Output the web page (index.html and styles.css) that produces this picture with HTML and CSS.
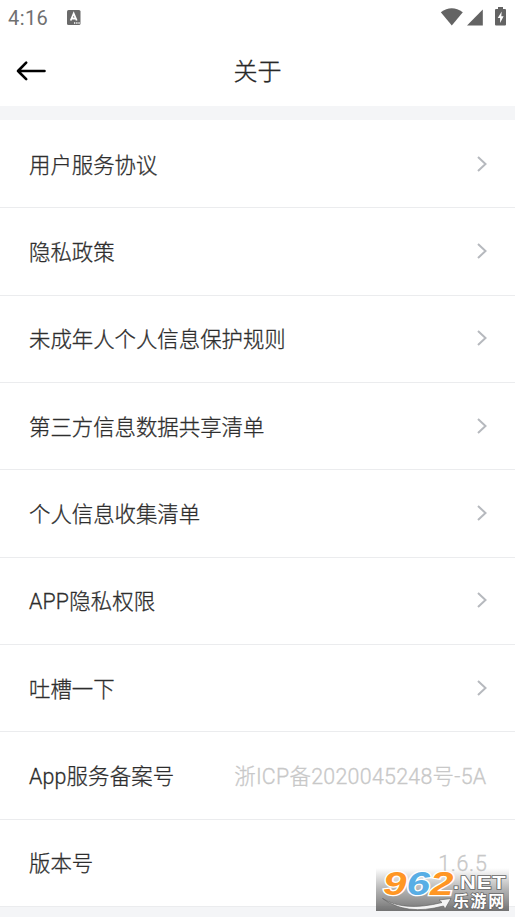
FILE: index.html
```html
<!DOCTYPE html>
<html lang="zh-CN">
<head>
<meta charset="utf-8">
<title>关于</title>
<link rel="stylesheet" href="styles.css">
</head>
<body>
<div class="screen">
  <div class="status">
    <span class="time">4:16</span>
    <svg class="badge" width="14" height="16" viewBox="0 0 14 16"><rect width="13.5" height="15" rx="1.5" fill="#6a6a6a"/><path d="M3.7 10.5 6.7 3.5 9.7 10.5M4.8 8.5H8.6" fill="none" stroke="#fff" stroke-width="1.8"/><path d="M7 13h1.3M9.2 13h1.3M11.4 13h1.3" stroke="#fff" stroke-width="1.3"/></svg>
    <svg class="signals" width="68" height="22" viewBox="0 0 68 22"><path d="M.8 5.3Q11.7-2.6 22.8 5.3L11.8 18.5Z" fill="#636363"/><path d="M42.8 2.5V18.5H27Z" fill="#636363"/><path d="M56 2h2V0h5v2h2q1 0 1 1v14.5q0 1-1 1h-9q-1 0-1-1V3q0-1 1-1Z" fill="#636363"/><path d="M61.7 4.5 57.7 11h2.4v5l3.5-6.8h-2.3Z" fill="#fff"/></svg>
  </div>
  <header class="bar">
    <svg class="back" width="30" height="22" viewBox="0 0 30 22"><path d="M10.2 2.6 2 11 10.2 19.2M2 11H28.5" fill="none" stroke="#000" stroke-width="2.6" stroke-linecap="round" stroke-linejoin="round"/></svg>
    <h1>关于</h1>
  </header>
  <main class="list">
    <div class="row"><span>用户服务协议</span><svg class="chev" viewBox="0 0 12 18"><path d="M2 2 9.5 9 2 16"/></svg></div>
    <div class="row"><span>隐私政策</span><svg class="chev" viewBox="0 0 12 18"><path d="M2 2 9.5 9 2 16"/></svg></div>
    <div class="row"><span>未成年人个人信息保护规则</span><svg class="chev" viewBox="0 0 12 18"><path d="M2 2 9.5 9 2 16"/></svg></div>
    <div class="row"><span>第三方信息数据共享清单</span><svg class="chev" viewBox="0 0 12 18"><path d="M2 2 9.5 9 2 16"/></svg></div>
    <div class="row"><span>个人信息收集清单</span><svg class="chev" viewBox="0 0 12 18"><path d="M2 2 9.5 9 2 16"/></svg></div>
    <div class="row"><span class="mixed">APP隐私权限</span><svg class="chev" viewBox="0 0 12 18"><path d="M2 2 9.5 9 2 16"/></svg></div>
    <div class="row"><span>吐槽一下</span><svg class="chev" viewBox="0 0 12 18"><path d="M2 2 9.5 9 2 16"/></svg></div>
    <div class="row"><span class="mixed">App服务备案号</span><span class="value">浙ICP备2020045248号-5A</span></div>
    <div class="row"><span>版本号</span><span class="value version">1.6.5</span></div>
  </main>
  <svg class="mark" width="133" height="43" viewBox="0 0 133 43">
    <defs><linearGradient id="shade" x1="0" y1="0" x2="0" y2="1"><stop offset="0" stop-color="#777" stop-opacity="0"/><stop offset=".5" stop-color="#777" stop-opacity=".55"/><stop offset="1" stop-color="#6c6c6c" stop-opacity=".95"/></linearGradient></defs>
    <rect width="133" height="43" fill="url(#shade)"/>
    <path d="M6.5 30.5Q28 44 66 34.5L63 32 75 30.5 69 41 67.5 38Q30 48 6.5 30.5Z" fill="#f4f4f4" stroke="#666" stroke-width=".7"/>
    <text class="digits" transform="translate(7 27) scale(1.28 1)"><tspan fill="#ff9624">9</tspan><tspan fill="#58aee5">6</tspan><tspan fill="#ff9624">2</tspan></text>
    <text class="net" transform="translate(77 21.3) scale(1.22 1)">.NET</text>
    <text class="brand" x="77" y="38.5">乐游网</text>
  </svg>
</div>
</body>
</html>
```
FILE: styles.css
```css
* { box-sizing: border-box; }
body { margin: 0; background: #f4f5f7; font-family: Roboto, "Noto Sans CJK SC", sans-serif; color: #2e2e2e; }
.screen { position: relative; height: 917px; overflow: hidden; }
.status { height: 36px; background: #fff; display: flex; align-items: flex-start; padding: 7px 7px 0 8px; }
.time { width: 59px; font-size: 20px; line-height: 23px; letter-spacing: .4px; color: #707070; }
.badge { margin-top: 3px; }
.signals { margin-left: auto; }
.bar { height: 70px; background: #fff; display: grid; grid-template-columns: 46px 1fr 46px; align-items: center; }
.back { margin-left: 16px; }
h1 { margin: 0; padding-bottom: 2px; text-align: center; font-size: 24px; line-height: 36px; font-weight: 300; font-family: "Noto Sans CJK SC", sans-serif; color: #282828; -webkit-text-stroke: .35px; }
.list { margin-top: 14px; background: #fff; }
.row { height: 87.33px; display: flex; align-items: center; justify-content: space-between; padding-left: 29px; padding-right: 28px; box-shadow: 0 1px #ebecee; font-size: 21.4px; line-height: 32px; white-space: nowrap; }
.row span { padding-top: 4px; font-weight: 300; -webkit-text-stroke: .3px; }
.row .mixed { letter-spacing: .15px; }
.chev { width: 12px; height: 18px; margin-right: -.5px; fill: none; stroke: #b6b9be; stroke-width: 2; }
.row .value { color: #c8c8c8; letter-spacing: .28px; margin-right: .5px; }
.row .version { letter-spacing: .7px; margin-right: -.5px; }
.mark { position: absolute; left: 376px; top: 868px; overflow: visible; }
.digits { font: italic 700 33px "Liberation Sans", sans-serif; stroke: #fff; stroke-width: 2.5px; paint-order: stroke; }
.net { font: 700 18px "Liberation Sans", sans-serif; letter-spacing: .7px; fill: #fff; stroke: #666; stroke-width: 1.5px; paint-order: stroke; }
.brand { font: 700 16px "Noto Sans CJK SC", sans-serif; letter-spacing: 1.6px; fill: #fff; stroke: #666; stroke-width: 1.5px; paint-order: stroke; }
```
